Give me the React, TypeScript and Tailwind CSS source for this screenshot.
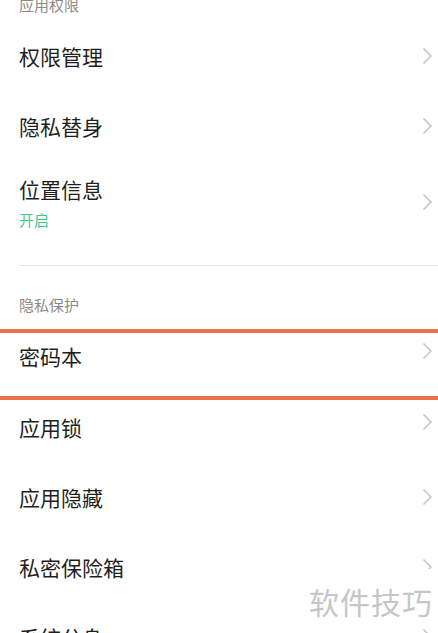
const font = { fontFamily: '"Noto Sans CJK SC", "Noto Sans", sans-serif' };

function Chevron() {
  return (
    <svg width="11" height="18" viewBox="0 0 11 18" className="shrink-0 mr-[5px]">
      <path d="M1.5 1.5 L9 9 L1.5 16.5" fill="none" stroke="#c4c4c4" strokeWidth="1.5" />
    </svg>
  );
}

function Row({ title, className = "h-[70px] items-center" }: { title: string; className?: string }) {
  return (
    <div className={"flex justify-between pl-[19px] " + className}>
      <span className="text-[21px] leading-[28px] text-[#1f1f1f]">{title}</span>
      <Chevron />
    </div>
  );
}

export default function App() {
  return (
    <div className="relative w-[438px] h-[633px] overflow-hidden bg-white" style={font}>
      <div className="mt-[-6px]">
        <div className="h-[27px] pl-[19px] text-[15px] leading-[22px] text-[#8a8a8a]">应用权限</div>
        <Row title="权限管理" />
        <Row title="隐私替身" />
        <div className="flex h-[82px] items-start justify-between pl-[19px] pt-[14px]">
          <div className="flex flex-col">
            <span className="text-[21px] leading-[28px] text-[#1f1f1f]">位置信息</span>
            <span className="mt-[7px] text-[15px] leading-[20px] text-[#3ec88c]">开启</span>
          </div>
          <div className="mt-[18px]">
            <Chevron />
          </div>
        </div>
        <div className="ml-[19px] mt-[22px] h-px bg-[#e6e6e6]" />
        <div className="mt-[29px] h-[20px] pl-[19px] text-[15px] leading-[20px] text-[#8a8a8a]">隐私保护</div>
        <div className="mt-[14px] border-y-4 border-[#e9714b]">
          <Row title="密码本" className="h-[63px] items-start pt-[9px]" />
        </div>
        <Row title="应用锁" className="h-[62px] items-start pt-[13px]" />
        <Row title="应用隐藏" />
        <Row title="私密保险箱" />
        <Row title="系统分身" />
      </div>
      <div className="absolute right-0 top-[569px] bg-white pl-[8px] pr-[5px] pt-[14px] text-[30px] leading-[36px] tracking-[1px] text-[#c6c6c6]">
        软件技巧
      </div>
    </div>
  );
}
